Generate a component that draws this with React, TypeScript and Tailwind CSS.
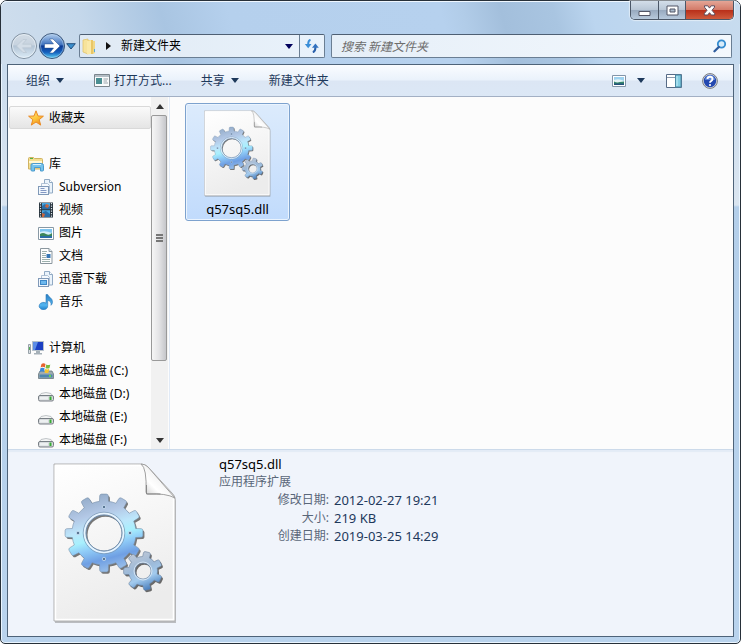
import React from 'react';

const gearPath = (cx: number, cy: number, outer: number, root: number, hole: number, teeth: number, start: number) => {
    const step = (Math.PI * 2) / teeth;
    const pt = (r: number, a: number) => `${(cx + r * Math.cos(a)).toFixed(2)} ${(cy + r * Math.sin(a)).toFixed(2)}`;
    let d = '';
    for (let i = 0; i < teeth; i++) {
        const a = start + i * step;
        d += `${i === 0 ? 'M' : 'L'}${pt(root, a - step * 0.27)}`;
        d += `L${pt(outer - 1.5, a - step * 0.22)}Q${pt(outer, a - step * 0.2)} ${pt(outer, a - step * 0.12)}`;
        d += `L${pt(outer, a + step * 0.12)}Q${pt(outer, a + step * 0.2)} ${pt(outer - 1.5, a + step * 0.22)}`;
        d += `L${pt(root, a + step * 0.27)}A${root} ${root} 0 0 1 ${pt(root, a + step * 0.73)}`;
    }
    d += `ZM${cx - hole} ${cy}a${hole} ${hole} 0 1 0 ${hole * 2} 0a${hole} ${hole} 0 1 0 ${-hole * 2} 0Z`;
    return d;
};

const BIG_GEAR = gearPath(51, 70, 39, 32, 18, 12, -Math.PI / 2);
const SMALL_GEAR = gearPath(90, 108, 19.5, 14.5, 8, 7, -1.35);

const DllIcon = ({ id, className }: { id: string; className: string }) => (
    <svg viewBox="0 0 126 162" className={className} aria-hidden="true">
        <defs>
            <linearGradient id={`${id}-page`} x1="0" y1="0" x2="0.3" y2="1">
                <stop offset="0" stopColor="#fff" />
                <stop offset="0.45" stopColor="#f7f7f7" />
                <stop offset="1" stopColor="#ececec" />
            </linearGradient>
            <linearGradient id={`${id}-big`} x1="0.35" y1="0" x2="0.62" y2="1">
                <stop offset="0" stopColor="#93abc8" />
                <stop offset="0.25" stopColor="#b3c8e6" />
                <stop offset="0.42" stopColor="#bde6fb" />
                <stop offset="0.55" stopColor="#a8f0fd" />
                <stop offset="0.66" stopColor="#90cdf8" />
                <stop offset="0.82" stopColor="#6f9fe3" />
                <stop offset="1" stopColor="#9fc3ea" />
            </linearGradient>
            <linearGradient id={`${id}-small`} x1="0.2" y1="0" x2="0.6" y2="1">
                <stop offset="0" stopColor="#c3c9d4" />
                <stop offset="0.45" stopColor="#9dbad9" />
                <stop offset="0.7" stopColor="#a3cbee" />
                <stop offset="1" stopColor="#4a7fbd" />
            </linearGradient>
            <linearGradient id={`${id}-fold`} x1="0" y1="1" x2="1" y2="0">
                <stop offset="0" stopColor="#bdbdbd" />
                <stop offset="0.35" stopColor="#fff" />
                <stop offset="1" stopColor="#dcdcdc" />
            </linearGradient>
        </defs>
        <path d="M2 2h86q4 0 7 3l25 26q3 3 3 7v122H2z" fill="#777" opacity="0.45" />
        <path d="M1 1h87q4 0 7 3l24 26q3 3 3 6v122H1z" fill={`url(#${id}-page)`} stroke="#b0b0b0" />
        <path d="M2.500 2.500h86M2.500 2.500v154h118V36" fill="none" stroke="#fff" strokeWidth="1.500" />
        <path d="M88 1q6 4 5 28 0 2 2 2 18-1 27 4L95 4q-3-3-7-3z" fill={`url(#${id}-fold)`} stroke="#a0a0a0" />
        <path d="M93.500 22v9h14" fill="none" stroke="#888" />
        <path d={BIG_GEAR} transform="translate(1.500 1.800)" fill="#333" fillRule="evenodd" opacity="0.65" />
        <path d={BIG_GEAR} fill={`url(#${id}-big)`} fillRule="evenodd" stroke="#7890aa" strokeWidth="0.6" />
        <circle cx="51" cy="70" r="20.800" fill="none" stroke="#7f9ab6" strokeWidth="0.800" />
        <circle cx="51" cy="70" r="19.300" fill="none" stroke="#e8f5ff" strokeWidth="1.800" />
        <circle cx="51" cy="70" r="18" fill="none" stroke="#7189a5" strokeWidth="0.900" />
        {[[51, 44], [77, 70], [51, 96], [25, 70]].map(([x, y]) => (
            <circle key={`${x}-${y}`} cx={x} cy={y} r="1.700" fill="#5a7694" stroke="#d3e8fb" strokeWidth="0.700" />
        ))}
        <path d={SMALL_GEAR} transform="translate(1.500 1.800)" fill="#222" fillRule="evenodd" opacity="0.65" />
        <path d={SMALL_GEAR} fill={`url(#${id}-small)`} fillRule="evenodd" stroke="#6a819e" strokeWidth="0.600" />
        <circle cx="90" cy="108" r="9" fill="none" stroke="#d5e4f3" />
    </svg>
);

const Caret = ({ className = '' }: { className?: string }) => (
    <svg viewBox="0 0 8 5" className={`w-2 h-[5px] ${className}`} aria-hidden="true"><path d="M0 0h8L4 5z" fill="currentColor" /></svg>
);

const StarIcon = () => (
    <svg viewBox="0 0 16 16" className="w-4 h-4">
        <defs>
            <linearGradient id="star" x1="0" y1="0" x2="0.6" y2="1">
                <stop offset="0" stopColor="#ffe98a" /><stop offset="0.6" stopColor="#fdc63c" /><stop offset="1" stopColor="#f0901c" />
            </linearGradient>
        </defs>
        <path d="M8 .8l2 5.200 5.400.2-4.200 3.500 1.500 5.400L8 12l-4.700 3.100 1.500-5.400L.6 6.200 6 6z" fill="url(#star)" stroke="#ea8a24" strokeLinejoin="round" />
    </svg>
);

const LibraryIcon = () => (
    <svg viewBox="0 0 16 16" className="w-4 h-4">
        <path d="M.5 2.500q0-1 1-1h4l1 1h7q1 0 1 1V13H.5z" fill="#f3de90" stroke="#d0b362" />
        <path d="M1 5h13v2H1z" fill="#fff8d3" />
        <path d="M2 2.500h3" stroke="#52b24a" />
        <path d="M3 9q0-1.500 1.500-1.500h9q2 0 2 2V14q0 1-1 1h-2v-3.500h-6V15H4q-1 0-1-1z" fill="#75c3ec" stroke="#4b9bcd" />
        <path d="M5 8.500h8" stroke="#d5f1ff" />
    </svg>
);

const DocStackIcon = ({ picture }: { picture?: boolean }) => (
    <svg viewBox="0 0 16 16" className="w-4 h-4">
        <path d="M6.500.5h5l3 3V14h-8z" fill="#eaf3fb" stroke="#91aac4" />
        <path d="M11.500.5v3h3" fill="#fff" stroke="#91aac4" />
        <path d="M3.500 4.500h6l2 2V14h-8z" fill="#f5f9fd" stroke="#9fb5cb" strokeWidth=".8" />
        <rect x=".5" y="7.500" width="10" height="8" fill="#f1f7fd" stroke="#8099b8" />
        {picture
            ? <rect x="2.500" y="9.500" width="6" height="4" fill="#6cb8ee" stroke="#3d88c8" />
            : <path d="M2.500 9.500h4M2.500 11.500h6M2.500 13.500h6" stroke="#8398c4" />}
    </svg>
);

const VideoIcon = () => (
    <svg viewBox="0 0 16 16" className="w-4 h-4">
        <path d="M1 .5h14v15H1z" fill="#26323c" />
        <path d="M4 1h8v14H4z" fill="#4aa5de" />
        <path d="M4 4l3-2 3 3 2-1v3H4zM5 10l3-1 4 3v3H4z" fill="#2b6ea8" />
        <path d="M8 2l3 1-1 3-3-1zM4 11l3 1-1 3H4z" fill="#c8663d" />
        <path d="M2.500 1v14M13.500 1v14" stroke="#dce6ea" strokeWidth="1.200" strokeDasharray="1.200 1.300" />
        <path d="M4 7.700h8" stroke="#26323c" />
    </svg>
);

const PictureIcon = () => (
    <svg viewBox="0 0 16 16" className="w-4 h-4">
        <path d="M.5 2.500h15v12H.5z" fill="#fff" stroke="#8899a5" />
        <path d="M2 4h12v9H2z" fill="#7fc5ef" />
        <path d="M2 7q5-2 12 1v2H2z" fill="#d4eff8" />
        <path d="M2 9q3-2 6 0t6-1v3H2z" fill="#3b8659" />
        <path d="M2 11h12v2H2z" fill="#2a6da5" />
    </svg>
);

const DocumentIcon = () => (
    <svg viewBox="0 0 16 16" className="w-4 h-4">
        <path d="M2.500.5h8.500l3 3v12H2.500z" fill="#fdfefe" stroke="#8b979f" />
        <path d="M11 .5v3h3" fill="#dfe9ef" stroke="#8b979f" />
        <path d="M4 3.500h5M4 5.500h4M4 7.500h4M4 9.500h4M4 11.500h8M4 13.500h8" stroke="#9db1ad" />
        <path d="M8.500 6h4v4h-4z" fill="#3677b5" />
    </svg>
);

const MusicIcon = () => (
    <svg viewBox="0 0 16 16" className="w-4 h-4">
        <defs>
            <linearGradient id="music" x1="0" y1="0" x2="0" y2="1"><stop offset="0" stopColor="#2b7fc4" /><stop offset="0.7" stopColor="#53b5f0" /><stop offset="1" stopColor="#1f80cb" /></linearGradient>
        </defs>
        <path d="M8 .5h1.700c.4 2.400 4.800 3.400 4.800 7.200 0 1.700-.7 2.800-1.500 3.600.6-3.200-1.300-4.500-3.300-5v5.400a4.300 3.700 0 1 1-1.700-2.600z" fill="url(#music)" stroke="#2b78b8" strokeWidth=".6" />
    </svg>
);

const ComputerIcon = () => (
    <svg viewBox="0 0 16 16" className="w-4 h-4">
        <path d="M.5 4.500h2v9h-2z" fill="#dadfe3" stroke="#98a2a9" />
        <path d="M1 7h1v3H1z" fill="#54ad58" />
        <path d="M4.500 1.500h11v9h-11z" fill="#1b3fc2" stroke="#b5c0c9" />
        <path d="M5 2h5l-3 8H5z" fill="#5c8ce6" />
        <path d="M8 11h4v2h2v1.500H6V13h2z" fill="#a5b0b8" />
    </svg>
);

const DriveIcon = ({ system }: { system?: boolean }) => (
    <svg viewBox="0 0 16 16" className="w-4 h-4">
        {system ? (
            <>
                <path d="M2 8h12l1.500 3v4.500H.5V11z" fill="#9fabb1" stroke="#687880" strokeWidth=".8" />
                <path d="M1.500 11.500h13v3h-13z" fill="#4c86ae" />
                <path d="M11 12h2v2h-2z" fill="#64da52" />
                <path d="M3.500 1q2-1.500 4 0L6.800 4.500q-2-1.300-4.200 0z" fill="#e8622d" />
                <path d="M8.300 1.400q2 1.200 4 0L11.500 5q-2 1.200-4 0z" fill="#7bbb3c" />
                <path d="M2.400 5.300q2-1.300 4.200 0L6 9q-2-1.300-4.300 0z" fill="#3b8ad8" />
                <path d="M7.300 5.800q2 1.200 4 0l-.8 3.700q-2 1.200-4 0z" fill="#f6c52f" />
            </>
        ) : (
            <>
                <path d="M3 7.500q5-2 10 0l2 3H1z" fill="#f4f5f5" stroke="#b3b8bb" strokeWidth=".8" />
                <rect x=".5" y="9.500" width="15" height="5.500" rx="1.500" fill="#d7dadd" stroke="#787f85" />
                <path d="M2 11h8v2.500H2z" fill="#edf0f1" />
                <path d="M11.500 10.500h2V14h-2z" fill="#38ad35" />
            </>
        )}
    </svg>
);

const libraries = [
    { name: 'Subversion', icon: <DocStackIcon /> },
    { name: '视频', icon: <VideoIcon /> },
    { name: '图片', icon: <PictureIcon /> },
    { name: '文档', icon: <DocumentIcon /> },
    { name: '迅雷下载', icon: <DocStackIcon picture /> },
    { name: '音乐', icon: <MusicIcon /> },
];

const drives = [
    { name: '本地磁盘 (C:)', icon: <DriveIcon system /> },
    { name: '本地磁盘 (D:)', icon: <DriveIcon /> },
    { name: '本地磁盘 (E:)', icon: <DriveIcon /> },
    { name: '本地磁盘 (F:)', icon: <DriveIcon /> },
];

const details = [
    { label: '修改日期:', value: '2012-02-27 19:21' },
    { label: '大小:', value: '219 KB' },
    { label: '创建日期:', value: '2019-03-25 14:29' },
];

const TreeItem = ({ icon, name, child }: { icon: React.ReactNode; name: string; child?: boolean }) => (
    <li>
        <a href="#" className={`flex items-center h-[23px] gap-[5px] whitespace-nowrap ${child ? 'pl-[30px]' : 'pl-5'}`}>
            {icon}
            <span>{name}</span>
        </a>
    </li>
);

const WindowControls = () => (
    <div className="flex h-[19px] mr-[6px] border border-t-0 border-[#4b5767] rounded-b-[5px] overflow-hidden shadow-[0_0_1px_1px_rgba(255,255,255,0.5)]">
        <button aria-label="最小化" className="w-[28px] flex items-center justify-center border-r border-[#4b5767] bg-[linear-gradient(#d3dee9_0%,#b9c7d6_48%,#98aabf_52%,#b7c9dc_100%)]">
            <svg viewBox="0 0 13 12" className="w-[13px] h-3"><path d="M1 7.500h11v4H1z" fill="#fff" stroke="#535666" /></svg>
        </button>
        <button aria-label="最大化" className="w-[27px] flex items-center justify-center border-r border-[#4b5767] bg-[linear-gradient(#d3dee9_0%,#b9c7d6_48%,#98aabf_52%,#b7c9dc_100%)]">
            <svg viewBox="0 0 13 11" className="w-[13px] h-[11px]"><path d="M1 1h11v9H1z" fill="#fff" stroke="#535666" /><path d="M4 4h5v3H4z" fill="#a9b9ca" stroke="#535666" /></svg>
        </button>
        <button aria-label="关闭" className="w-[47px] flex items-center justify-center bg-[linear-gradient(#e4a596_0%,#d37b69_48%,#b9301a_52%,#cf5b3d_100%)]">
            <svg viewBox="0 0 13 11" className="w-[13px] h-[11px]"><path d="M1.500.8h3.300l1.700 2.300L8.200.8h3.300v1.400L9 5.300l2.700 3.300V10H8.300L6.500 7.700 4.700 10H1.300V8.600L4 5.300 1.500 2.200z" fill="#fff" stroke="#5b4b5c" /></svg>
        </button>
    </div>
);

const NavButtons = () => (
    <div className="flex items-center w-[69px]">
        <svg width="0" height="0" className="absolute">
            <defs>
                <linearGradient id="navBack" x1="0" y1="0" x2="0" y2="1"><stop offset="0" stopColor="#d3dce5" /><stop offset="0.45" stopColor="#c7d3df" /><stop offset="0.5" stopColor="#b3c4d5" /><stop offset="1" stopColor="#dcecf7" /></linearGradient>
                <linearGradient id="navFwd" x1="0" y1="0" x2="0" y2="1"><stop offset="0" stopColor="#b5d0ef" /><stop offset="0.45" stopColor="#3f72be" /><stop offset="0.5" stopColor="#0d3a93" /><stop offset="0.75" stopColor="#1560bd" /><stop offset="1" stopColor="#5cd5f8" /></linearGradient>
            </defs>
        </svg>
        <button aria-label="后退" className="w-7 h-7">
            <svg viewBox="0 0 28 28" className="w-7 h-7">
                <circle cx="14" cy="14" r="12.500" fill="url(#navBack)" stroke="#7f8f9f" />
                <circle cx="14" cy="14" r="11.500" fill="none" stroke="#edf4f9" opacity=".7" />
                <path d="M6.500 14l6.500-6.500h3.500l-4 4.700h9v3.600h-9l4 4.700H13z" fill="#d3dde7" stroke="#bac7d3" strokeWidth=".7" />
            </svg>
        </button>
        <button aria-label="前进" className="w-7 h-7">
            <svg viewBox="0 0 28 28" className="w-7 h-7">
                <circle cx="14" cy="14" r="12.500" fill="url(#navFwd)" stroke="#3b5578" />
                <circle cx="14" cy="14" r="11.500" fill="none" stroke="#b9d8f2" opacity=".5" />
                <path d="M22 14l-7 7h-3.500l4-4.900h-9v-4.200h9L11.500 7H15z" fill="#fff" stroke="#234d8d" strokeWidth=".5" />
            </svg>
        </button>
        <button aria-label="最近浏览的位置" className="w-[9px] flex justify-center">
            <svg viewBox="0 0 10 7" className="w-2.5 h-[7px] shrink-0"><path d="M.7.7h8.600L5 6z" fill="#3b8fce" stroke="#244f7c" /></svg>
        </button>
    </div>
);

const AddressBar = () => (
    <div className="flex items-stretch gap-[6px] h-[24px] pl-[9px] pr-2">
        <NavButtons />
        <div className="flex basis-[246px] grow-0 shrink border border-[#6a7e93] border-t-[#4e5f73] rounded-[2px] bg-linear-to-r from-[#e0eaf4] to-[#e9f2fb] -ml-[6px] text-black">
            <div className="flex flex-1 items-center pl-[2px] pr-[6px]">
                <svg viewBox="0 0 15 17" className="w-[15px] h-[17px]">
                    <path d="M1 2l5-1v15l-5-2z" fill="#f7e39b" stroke="#dfbf62" strokeWidth=".7" />
                    <path d="M6 2h5v14H6z" fill="#e9c666" />
                    <path d="M5 3l4-1v14l-4 .5z" fill="#fae9a8" />
                    <path d="M11 3h2v12l-2 1z" fill="#f0d786" />
                    <path d="M12.500 11v3" stroke="#5ba9dd" />
                </svg>
                <svg viewBox="0 0 5 8" className="w-[5px] h-2 ml-[9px]"><path d="M0 0l5 4-5 4z" fill="#111" /></svg>
                <span className="ml-[10px] flex-1 whitespace-nowrap">新建文件夹</span>
                <button aria-label="以前的位置" className="text-[#00005c]"><Caret /></button>
            </div>
            <button aria-label="刷新" className="w-[25px] border-l border-[#6a7e93] flex items-center justify-center">
                <svg viewBox="0 0 16 14" className="w-4 h-3.5">
                    <path d="M6.500.8Q4 1.500 4.200 6" fill="none" stroke="#3a8ed8" strokeWidth="2" />
                    <path d="M.8 5h6.700L4.200 9.200z" fill="#3a8ed8" />
                    <path d="M8.800 13.200q2.800-.8 2.600-5.200" fill="none" stroke="#285faa" strokeWidth="2" />
                    <path d="M8 8.800h6.800l-3.400-4.200z" fill="#3272c0" />
                </svg>
            </button>
        </div>
        <label className="flex flex-1 items-center border border-[#6a7e93] border-t-[#4e5f73] rounded-[2px] bg-linear-to-r from-[#e6eff8] to-[#f3f8fd] pl-[9px] pr-[4px]">
            <input type="text" aria-label="搜索 新建文件夹" placeholder="搜索 新建文件夹" className="flex-1 min-w-0 h-5 italic bg-transparent outline-none placeholder:text-[#6d6d6d]" />
            <svg viewBox="0 0 14 14" className="w-3.5 h-3.5"><circle cx="8.500" cy="5" r="3.700" fill="#d7ecfa" stroke="#348cd0" strokeWidth="1.800" /><path d="M5.800 8L1.500 12.200" stroke="#2f5d9e" strokeWidth="2.300" strokeLinecap="round" /></svg>
        </label>
    </div>
);

const Toolbar = () => (
    <div className="flex items-center shrink-0 h-8 pl-[18px] pr-[15px] border-b border-[#a3b0c4] text-[#1e395b] whitespace-nowrap bg-[linear-gradient(#fafcff_0%,#eaf2fb_48%,#dce6f4_52%,#dce8f6_100%)]">
        <button className="flex items-center gap-[6px]">组织<Caret /></button>
        <button className="flex items-center gap-1 ml-[30px]">
            <svg viewBox="0 0 16 13" className="w-4 h-[13px]">
                <path d="M.5.5h15v12H.5z" fill="#f9fbfc" stroke="#7b858d" />
                <path d="M1 1h14v2H1z" fill="#b4bec6" />
                <path d="M2 4h6v6H2z" fill="#4b8f93" />
                <path d="M9.500 5H14M9.500 7H13M9.500 9H14" stroke="#9ba5ac" />
            </svg>
            打开方式...
        </button>
        <button className="flex items-center gap-[6px] ml-[29px]">共享<Caret /></button>
        <button className="ml-[30px]">新建文件夹</button>
        <div className="flex items-center ml-auto">
            <button aria-label="更改您的视图">
                <svg viewBox="0 0 14 12" className="w-3.5 h-3"><path d="M.5.500h13v11H.5z" fill="#fff" stroke="#8295a9" /><path d="M2 2h10v8H2z" fill="#9ed2ef" /><path d="M2 5q5-2 10 1v2H2z" fill="#e3f3f5" /><path d="M2 6.500q3 1.500 6 .5l4-.5V9H2z" fill="#34856a" /><path d="M2 8.500h10V10H2z" fill="#25517c" /></svg>
            </button>
            <button aria-label="更多选项" className="ml-[11px]"><Caret /></button>
            <button aria-label="显示预览窗格" className="ml-[21px]">
                <svg viewBox="0 0 16 14" className="w-4 h-3.5"><path d="M.5.500h15v13H.5z" fill="#fff" stroke="#566b86" /><path d="M1 3.500h9" stroke="#8c9aac" /><path d="M9.500 1H15v12H9.500z" fill="#83cde2" stroke="#4b8aa5" /><path d="M11 2v10" stroke="#c3edf7" /></svg>
            </button>
            <button aria-label="获取帮助" className="ml-5">
                <svg viewBox="0 0 16 16" className="w-4 h-4"><circle cx="8" cy="8" r="7.400" fill="#d9dbde" stroke="#777b82" /><circle cx="8" cy="8" r="6.200" fill="#2348b0" /><path d="M3 7a5 5 0 0 1 10 0z" fill="#5e85d8" /><path d="M5.500 6Q5.600 3.800 8 3.800T10.500 6q0 1.200-1.200 1.900Q8 8.600 8 9.800" fill="none" stroke="#fff" strokeWidth="1.900" /><circle cx="8" cy="12" r="1.100" fill="#fff" /></svg>
            </button>
        </div>
    </div>
);

const Sidebar = () => (
    <div className="flex shrink-0 w-[162px] border-r border-[#e1eaf6]">
        <nav className="flex-1 min-w-0 overflow-hidden pt-[9px] pl-px">
            <a href="#" className="flex items-center h-[23px] gap-[5px] pl-[18px] border border-[#d9d9d9] rounded-[2px] bg-linear-to-b from-[#fafafa] to-[#e5e5e5]">
                <StarIcon />
                <span>收藏夹</span>
            </a>
            <ul className="mt-[23px] -ml-px">
                <TreeItem icon={<LibraryIcon />} name="库" />
                {libraries.map((l) => <TreeItem key={l.name} icon={l.icon} name={l.name} child />)}
            </ul>
            <ul className="mt-[23px] -ml-px">
                <TreeItem icon={<ComputerIcon />} name="计算机" />
                {drives.map((d) => <TreeItem key={d.name} icon={d.icon} name={d.name} child />)}
            </ul>
        </nav>
        <div className="flex flex-col w-[17px] mr-px bg-[#f1f1f1]">
            <button aria-label="向上滚动" className="h-[18px] flex items-center justify-center text-[#333]"><Caret className="rotate-180" /></button>
            <div className="flex-1 min-h-0">
                <div className="h-[78%] mr-px flex flex-col justify-center items-center gap-px border border-[#999] rounded-[2px] bg-linear-to-r from-[#f6f6f6] via-[#e4e4e6] to-[#c5c6ca]">
                    <span className="w-[7px] h-[2px] bg-[#777]" />
                    <span className="w-[7px] h-[2px] bg-[#777]" />
                    <span className="w-[7px] h-[2px] bg-[#777]" />
                </div>
            </div>
            <button aria-label="向下滚动" className="h-[18px] flex items-center justify-center text-[#333]"><Caret /></button>
        </div>
    </div>
);

const DetailsPane = () => (
    <footer className="flex shrink-0 h-[187px] border-t border-[#ccdaea] bg-[#f0f4fb] shadow-[inset_0_2px_1px_#e3ebf6]">
        <DllIcon id="large" className="w-[126px] h-[162px] ml-[45px] mt-[13px]" />
        <div className="ml-10 pt-[5px] leading-[18px]">
            <h2 className="text-[13px] text-black">q57sq5.dll</h2>
            <p className="text-[#5a6779]">应用程序扩展</p>
            <dl className="grid grid-cols-[110px_auto] gap-x-[5px]">
                {details.map((d) => (
                    <React.Fragment key={d.label}>
                        <dt className="text-right text-[#5a6779]">{d.label}</dt>
                        <dd className="text-[13px] text-[#1e395b]">{d.value}</dd>
                    </React.Fragment>
                ))}
            </dl>
        </div>
    </footer>
);

export default function App() {
    return (
        <div className="flex flex-col h-screen border border-[#273039] rounded-t-[7px] rounded-b-[5px] shadow-[inset_0_0_0_1px_#eaf5ff] text-[12px] leading-[18px] text-black font-['Noto_Sans','Noto_Sans_CJK_SC',sans-serif] bg-[linear-gradient(#c3d8ed_0px,#dae5f0_204px,#b4cfea_206px,#b9d3ed_100%)]">
            <header className="rounded-t-[6px] pb-[6px] shadow-[inset_0_1px_0_#eff7ff] bg-[linear-gradient(75deg,#cfdeed_0%,#c5d8eb_12%,#a9c5e2_23%,#b5d0ed_32%,#b6d1ee_60%,#b1cce8_63%,#a3bfdc_68%,#a9c5e1_75%,#bbd5ef_80%,#c8dcef_100%)]">
                <div className="flex justify-end h-[33px]"><WindowControls /></div>
                <AddressBar />
            </header>
            <div className="flex flex-col flex-1 min-h-0 mx-[6px] mb-[6px] border border-[#4e6379] bg-[#fcfcfc]">
                <Toolbar />
                <div className="flex flex-1 min-h-0">
                    <Sidebar />
                    <main className="flex-1 overflow-hidden pt-[6px] pl-[15px]">
                        <button className="flex flex-col items-center w-[105px] h-[118px] pt-[6px] border border-[#7da2ce] rounded-[3px] bg-linear-to-b from-[#dcebfc] to-[#c1dbfc] shadow-[inset_0_0_0_1px_#ebf4fe]">
                            <DllIcon id="small" className="w-[68px] h-[88px]" />
                            <span className="mt-[2px] text-[13px]">q57sq5.dll</span>
                        </button>
                    </main>
                </div>
                <DetailsPane />
            </div>
        </div>
    );
}
